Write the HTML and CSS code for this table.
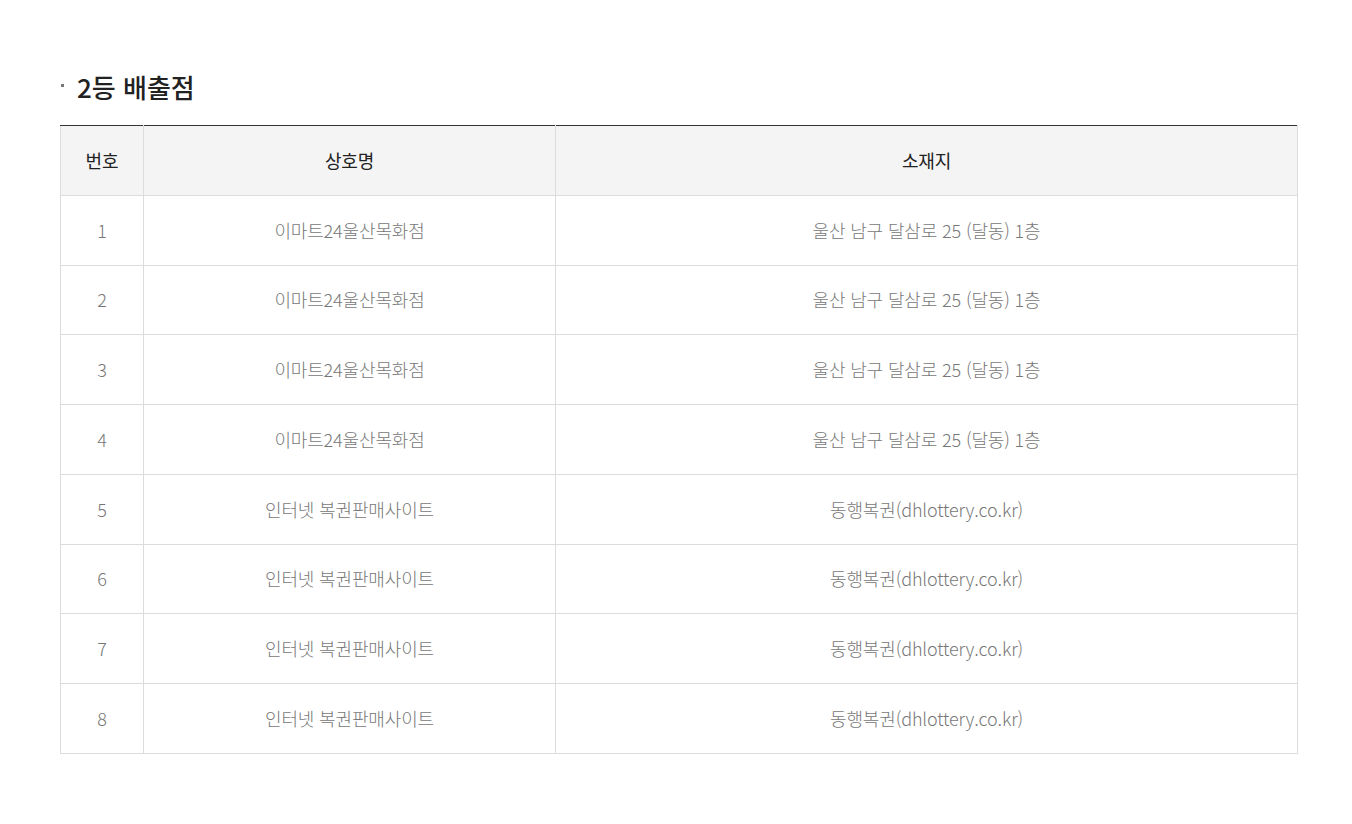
FILE: index.html
```html
<!DOCTYPE html>
<html lang="ko">
<head>
<meta charset="utf-8">
<link rel="stylesheet" href="styles.css">
</head>
<body>
<div class="wrap">
  <h3 class="title"><span class="bullet"></span>2등 배출점</h3>
  <table class="tbl">
    <colgroup>
      <col class="c1"><col class="c2"><col class="c3">
    </colgroup>
    <thead>
      <tr><th>번호</th><th>상호명</th><th>소재지</th></tr>
    </thead>
    <tbody>
      <tr><td>1</td><td>이마트24울산목화점</td><td>울산 남구 달삼로 25 (달동) 1층</td></tr>
      <tr><td>2</td><td>이마트24울산목화점</td><td>울산 남구 달삼로 25 (달동) 1층</td></tr>
      <tr><td>3</td><td>이마트24울산목화점</td><td>울산 남구 달삼로 25 (달동) 1층</td></tr>
      <tr><td>4</td><td>이마트24울산목화점</td><td>울산 남구 달삼로 25 (달동) 1층</td></tr>
      <tr><td>5</td><td>인터넷 복권판매사이트</td><td>동행복권(dhlottery.co.kr)</td></tr>
      <tr><td>6</td><td>인터넷 복권판매사이트</td><td>동행복권(dhlottery.co.kr)</td></tr>
      <tr><td>7</td><td>인터넷 복권판매사이트</td><td>동행복권(dhlottery.co.kr)</td></tr>
      <tr><td>8</td><td>인터넷 복권판매사이트</td><td>동행복권(dhlottery.co.kr)</td></tr>
    </tbody>
  </table>
</div>
</body>
</html>
```
FILE: styles.css
```css
html, body { margin: 0; padding: 0; background: #fff; }
body { font-family: "Noto Sans CJK KR", "Noto Sans", sans-serif; }
.wrap { padding: 69px 55px 0 60px; }
.title {
  margin: 0 0 20px 0;
  display: flex;
  align-items: center;
  font-size: 26px;
  font-weight: 500;
  color: #222;
  letter-spacing: 0;
  line-height: 36px;
}
.bullet {
  width: 3px; height: 3px; background: #777;
  margin: 0 13px 0 1px;
  position: relative; top: -2px;
}
.tbl {
  width: 1238px;
  border-collapse: collapse;
  table-layout: fixed;
}
.c1 { width: 83px; }
.c2 { width: 412px; }
.tbl th, .tbl td {
  height: 67.75px;
  padding: 0 0 1px 0;
  text-align: center;
  border: 1px solid #dcdcdc;
  font-size: 18px;
  letter-spacing: -0.15px;
}
.tbl thead th { border-top: 1px solid #333; }
.tbl th {
  background: #f4f4f4;
  color: #222;
  font-weight: 400;
}
.tbl td {
  color: #777;
  font-weight: 300;
}
```
